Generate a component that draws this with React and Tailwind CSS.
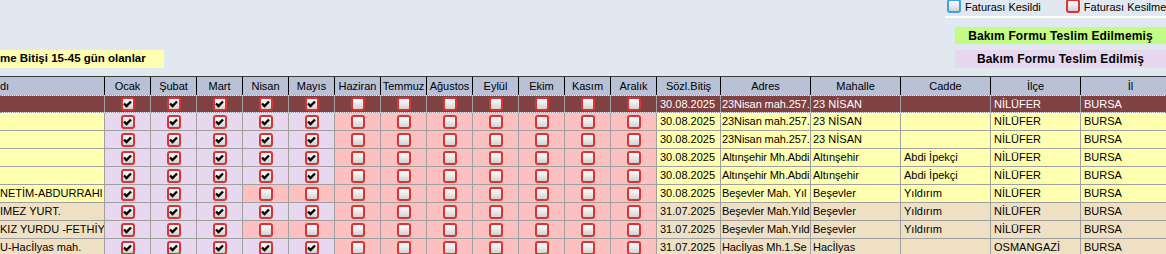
import React from 'react';

const MONTHS = ['Ocak', 'Şubat', 'Mart', 'Nisan', 'Mayıs', 'Haziran', 'Temmuz', 'Ağustos', 'Eylül', 'Ekim', 'Kasım', 'Aralık'];

const FIVE = [1, 1, 1, 1, 1, 0, 0, 0, 0, 0, 0, 0];
const THREE = [1, 1, 1, 0, 0, 0, 0, 0, 0, 0, 0, 0];

const rows = [
    { name: '', months: FIVE, date: '30.08.2025', adres: '23Nisan mah.257.', mahalle: '23 NİSAN', cadde: '', ilce: 'NİLÜFER', il: 'BURSA', tone: 'sel' },
    { name: '', months: FIVE, date: '30.08.2025', adres: '23Nisan mah.257.', mahalle: '23 NİSAN', cadde: '', ilce: 'NİLÜFER', il: 'BURSA', tone: 'yellow' },
    { name: '', months: FIVE, date: '30.08.2025', adres: '23Nisan mah.257.', mahalle: '23 NİSAN', cadde: '', ilce: 'NİLÜFER', il: 'BURSA', tone: 'yellow' },
    { name: '', months: FIVE, date: '30.08.2025', adres: 'Altınşehir Mh.Abdi', mahalle: 'Altınşehir', cadde: 'Abdi İpekçi', ilce: 'NİLÜFER', il: 'BURSA', tone: 'yellow' },
    { name: '', months: FIVE, date: '30.08.2025', adres: 'Altınşehir Mh.Abdi', mahalle: 'Altınşehir', cadde: 'Abdi İpekçi', ilce: 'NİLÜFER', il: 'BURSA', tone: 'yellow' },
    { name: 'NETİM-ABDURRAHI', months: THREE, date: '30.08.2025', adres: 'Beşevler Mah. Yıl', mahalle: 'Beşevler', cadde: 'Yıldırım', ilce: 'NİLÜFER', il: 'BURSA', tone: 'yellow' },
    { name: 'IMEZ YURT.', months: FIVE, date: '31.07.2025', adres: 'Beşevler Mah.Yıld', mahalle: 'Beşevler', cadde: 'Yıldırım', ilce: 'NİLÜFER', il: 'BURSA', tone: 'beige' },
    { name: 'KIZ YURDU -FETHİY', months: THREE, date: '31.07.2025', adres: 'Beşevler Mah.Yıld', mahalle: 'Beşevler', cadde: 'Yıldırım', ilce: 'NİLÜFER', il: 'BURSA', tone: 'beige' },
    { name: 'U-Hacİlyas mah.', months: FIVE, date: '31.07.2025', adres: 'Hacİlyas Mh.1.Se', mahalle: 'Hacİlyas', cadde: '', ilce: 'OSMANGAZİ', il: 'BURSA', tone: 'beige' },
];

const toneBg = {
    sel: 'bg-[#7f4141] text-white',
    yellow: 'bg-[#ffffb0] text-black',
    beige: 'bg-[#efe0c4] text-black',
};

const CheckBox = ({ checked, color = 'red' }) => (
    <div
        className={`w-[14px] h-[14px] rounded-[3px] border-2 flex items-center justify-center bg-gradient-to-b from-white to-[#d2d2d2] ${
            color === 'blue' ? 'border-[#3ba3e3]' : 'border-[#d83434]'
        }`}
    >
        {checked ? (
            <svg width="9" height="8" viewBox="0 0 9 8">
                <path d="M1 3.5 L3.5 6 L8 1.5" fill="none" stroke="#000" strokeWidth="2.4" />
            </svg>
        ) : null}
    </div>
);

const Cell = ({ w, className = '', children }) => (
    <div className={`${w} h-full shrink-0 border-r border-[#a0a0a0] overflow-hidden whitespace-nowrap flex items-center ${className}`}>
        {children}
    </div>
);

const HeadCell = ({ w, children }) => (
    <div className={`${w} h-full shrink-0 border-r border-black flex items-center justify-center overflow-hidden whitespace-nowrap`}>
        {children}
    </div>
);

export default function App() {
    return (
        <div className="w-[1166px] h-[254px] overflow-hidden bg-[#e2e8f0] font-['Liberation_Sans',Arial,sans-serif] text-[11px] text-black">
            {/* Top bar */}
            <div className="h-[76px] flex justify-between">
                <div className="flex flex-col justify-end pb-[8px]">
                    <div className="w-[164px] h-[18px] bg-[#ffffb0] font-bold text-[11.5px] flex items-center whitespace-nowrap">
                        me Bitişi 15-45 gün olanlar
                    </div>
                </div>
                <div className="w-[221px] flex flex-col">
                    <div className="h-[18px] border-b-2 border-white flex items-start pl-[2px] gap-[4px] whitespace-nowrap overflow-hidden">
                        <div className="-mt-[1px]">
                            <CheckBox color="blue" />
                        </div>
                        <span className="-mt-[1px] mr-[21px] leading-[16px]">Faturası Kesildi</span>
                        <div className="-mt-[1px]">
                            <CheckBox />
                        </div>
                        <span className="-mt-[1px] leading-[16px]">Faturası Kesilmedi</span>
                    </div>
                    <div className="ml-[10px] mt-[9px] h-[17px] bg-[#c2fc85] font-bold text-[12px] tracking-[0.15px] flex items-center justify-center whitespace-nowrap">
                        Bakım Formu Teslim Edilmemiş
                    </div>
                    <div className="ml-[10px] mt-[6px] h-[18px] bg-[#e7d8ef] font-bold text-[12px] tracking-[0.15px] flex items-center justify-center whitespace-nowrap">
                        Bakım Formu Teslim Edilmiş
                    </div>
                </div>
            </div>

            {/* Header */}
            <div className="h-[19px] flex bg-[#b9c1d6] border-t border-[#3c3c3c]">
                <div className="w-[105px] h-full shrink-0 border-r border-black flex items-center">dı</div>
                {MONTHS.map((m) => (
                    <HeadCell key={m} w="w-[46px]">{m}</HeadCell>
                ))}
                <HeadCell w="w-[64px]">Sözl.Bitiş</HeadCell>
                <HeadCell w="w-[90px]">Adres</HeadCell>
                <HeadCell w="w-[90px]">Mahalle</HeadCell>
                <HeadCell w="w-[90px]">Cadde</HeadCell>
                <HeadCell w="w-[90px]">İlçe</HeadCell>
                <HeadCell w="w-[100px]">İl</HeadCell>
            </div>

            {/* Rows */}
            {rows.map((r, i) => {
                const sel = r.tone === 'sel';
                return (
                    <div
                        key={i}
                        className={`h-[18px] flex ${
                            sel ? 'border-y border-dotted border-[#5fb3b3]' : 'border-b border-[#a0a0a0]'
                        }`}
                    >
                        <Cell w="w-[105px]" className={toneBg[r.tone]}>
                            {r.name}
                        </Cell>
                        {r.months.map((c, j) => (
                            <Cell
                                key={j}
                                w="w-[46px]"
                                className={`justify-center ${
                                    sel ? 'bg-[#7f4141]' : c ? 'bg-[#e7d8ef]' : 'bg-[#fdc0c0]'
                                }`}
                            >
                                <CheckBox checked={!!c} />
                            </Cell>
                        ))}
                        <Cell w="w-[64px]" className={`pl-[3px] ${toneBg[r.tone]}`}>
                            {r.date}
                        </Cell>
                        <Cell w="w-[90px]" className={`pl-[1px] tracking-[-0.1px] ${toneBg[r.tone]}`}>
                            {r.adres}
                        </Cell>
                        <Cell w="w-[90px]" className={`pl-[2px] ${toneBg[r.tone]}`}>
                            {r.mahalle}
                        </Cell>
                        <Cell w="w-[90px]" className={`pl-[3px] ${toneBg[r.tone]}`}>
                            {r.cadde}
                        </Cell>
                        <Cell w="w-[90px]" className={`pl-[3px] ${toneBg[r.tone]}`}>
                            {r.ilce}
                        </Cell>
                        <Cell w="w-[100px]" className={`pl-[3px] ${toneBg[r.tone]}`}>
                            {r.il}
                        </Cell>
                    </div>
                );
            })}
        </div>
    );
}
